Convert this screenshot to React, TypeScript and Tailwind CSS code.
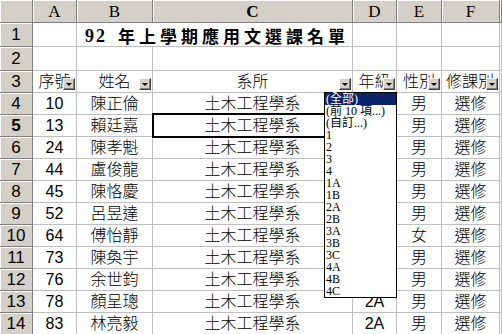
import React from "react";

const rows: [string, string, string][] = [
  ["10", "陳正倫", "男"],
  ["13", "賴廷嘉", "男"],
  ["24", "陳孝魁", "男"],
  ["44", "盧俊龍", "男"],
  ["45", "陳恪慶", "男"],
  ["52", "呂昱達", "男"],
  ["64", "傅怡靜", "女"],
  ["73", "陳奐宇", "男"],
  ["76", "余世鈞", "男"],
  ["78", "顏呈璁", "男"],
  ["83", "林亮毅", "男"],
];

const listItems = [
  "(全部)",
  "(前 10 項...)",
  "(自訂...)",
  "1",
  "2",
  "3",
  "4",
  "1A",
  "1B",
  "2A",
  "2B",
  "3A",
  "3B",
  "3C",
  "4A",
  "4B",
  "4C",
];

const hdr =
  "bg-[#D4D0C8] border-r border-b border-[#808080] shadow-[inset_1px_1px_0_#ffffff] flex items-center justify-center text-black";
const cell =
  "border-r border-b border-[#C0C0C0] bg-white flex items-center justify-center overflow-hidden whitespace-nowrap text-black relative";
const sansNum = "font-['Liberation_Sans','Noto_Sans_CJK_TC',sans-serif] text-[16px] leading-[16px]";
const cjk = "font-['Liberation_Sans','Noto_Sans_CJK_TC',sans-serif] text-[16px] leading-[16px] font-light";
const rowHdrText = "font-['Liberation_Sans',sans-serif] text-[17px] leading-[17px]";
const colHdrText = "font-['Liberation_Serif',serif] text-[17px] leading-[17px]";

function FilterBtn() {
  return (
    <div className="absolute right-[1px] bottom-[2px] w-[12px] h-[12px] bg-[#D4D0C8] border-t border-l border-t-white border-l-white border-r border-b border-r-[#404040] border-b-[#404040] shadow-[inset_-1px_-1px_0_#808080] flex items-center justify-center z-10">
      <div className="w-0 h-0 border-l-[3px] border-r-[3px] border-t-[3px] border-l-transparent border-r-transparent border-t-black mt-[1px]" />
    </div>
  );
}

export default function App() {
  return (
    <div className="relative w-[502px] h-[334px] overflow-hidden bg-white">
      <div className="grid grid-cols-[33px_44px_76px_200px_44px_45px_58px_1fr] grid-rows-[23px_24px_24px_repeat(12,22px)]">
        {/* column headers */}
        <div className={hdr} />
        <div className={hdr}><span className={colHdrText}>A</span></div>
        <div className={hdr}><span className={colHdrText}>B</span></div>
        <div className={hdr}><span className={colHdrText + " font-bold"}>C</span></div>
        <div className={hdr}><span className={colHdrText}>D</span></div>
        <div className={hdr}><span className={colHdrText}>E</span></div>
        <div className={hdr}><span className={colHdrText}>F</span></div>
        <div className={hdr} />

        {/* row 1 */}
        <div className={hdr}><span className={rowHdrText}>1</span></div>
        <div className={cell} />
        <div className="col-span-2 border-r border-b border-[#C0C0C0] bg-white flex items-center whitespace-nowrap pl-[8px] pt-[2px]">
          <span className="font-['Liberation_Serif',serif] font-bold text-[18px] leading-[18px] tracking-[2px]">92</span>
          <span className="ml-[11px] font-['Noto_Sans_CJK_TC',sans-serif] font-bold text-[17px] leading-[17px] tracking-[4px]">
            年上學期應用文選課名單
          </span>
        </div>
        <div className={cell} />
        <div className={cell} />
        <div className={cell} />
        <div className={cell} />

        {/* row 2 */}
        <div className={hdr}><span className={rowHdrText}>2</span></div>
        <div className={cell} />
        <div className={cell} />
        <div className={cell} />
        <div className={cell} />
        <div className={cell} />
        <div className={cell} />
        <div className={cell} />

        {/* row 3 */}
        <div className={hdr}><span className={rowHdrText}>3</span></div>
        <div className={cell}><span className={cjk}>序號</span><FilterBtn /></div>
        <div className={cell}><span className={cjk}>姓名</span><FilterBtn /></div>
        <div className={cell}><span className={cjk}>系所</span><FilterBtn /></div>
        <div className={cell}><span className={cjk}>年級</span><FilterBtn /></div>
        <div className={cell}><span className={cjk}>性別</span><FilterBtn /></div>
        <div className={cell + " justify-start pl-[4px]"}><span className={cjk}>修課別</span><FilterBtn /></div>
        <div className={cell} />

        {rows.map(([no, name, sex], i) => {
          const r = i + 4;
          const sel = r === 5;
          return (
            <React.Fragment key={r}>
              <div className={hdr}>
                <span className={rowHdrText + (sel ? " font-bold" : "")}>{r}</span>
              </div>
              <div className={cell}><span className={sansNum}>{no}</span></div>
              <div className={cell}><span className={cjk}>{name}</span></div>
              <div className={sel ? cell + " overflow-visible" : cell}>
                <span className={cjk}>土木工程學系</span>
                {sel && (
                  <div className="absolute -top-[2px] -left-[1px] -right-[2px] -bottom-[2px] border-2 border-black z-10" />
                )}
              </div>
              <div className={cell}>{r >= 13 && <span className={sansNum}>2A</span>}</div>
              <div className={cell}><span className={cjk}>{sex}</span></div>
              <div className={cell}><span className={cjk}>選修</span></div>
              <div className={cell} />
            </React.Fragment>
          );
        })}
      </div>

      {/* autofilter dropdown */}
      <div className="absolute left-[324px] top-[92px] w-[73px] h-[206px] bg-white border border-black z-20 flex flex-col">
        {listItems.map((it, i) => (
          <div
            key={it}
            className={
              "h-[12px] leading-[12px] pl-[1px] whitespace-nowrap font-['Liberation_Serif','Noto_Sans_CJK_TC',serif] text-[12px] " +
              (i === 0 ? "bg-[#0A246A] text-white" : "text-black")
            }
          >
            {it}
          </div>
        ))}
      </div>
    </div>
  );
}
